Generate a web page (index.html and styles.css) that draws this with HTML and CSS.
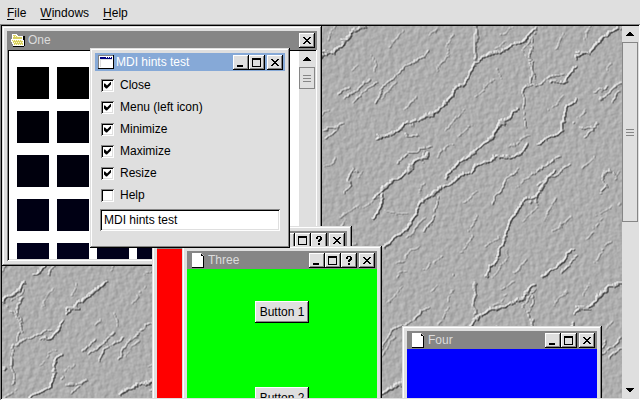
FILE: index.html
```html
<!DOCTYPE html>
<html lang="en">
<head>
<meta charset="utf-8">
<title>Workspace</title>
<link rel="stylesheet" href="styles.css">
</head>
<body>
<svg class="defs" aria-hidden="true">
  <symbol id="min" viewBox="0 0 16 15"><path d="M4 10h6v2H4z"/></symbol>
  <symbol id="max" viewBox="0 0 16 15"><path fill-rule="evenodd" d="M3 3h9v9H3zM4 5v6h7V5z"/></symbol>
  <symbol id="close" viewBox="0 0 16 15"><path d="M4 4h2v1h1v1h2V5h1V4h2v1h-1v1h-1v1H9v1h1v1h1v1h1v1h-2v-1H9V9H7v1H6v1H4v-1h1V9h1V8h1V7H6V6H5V5H4z"/></symbol>
  <symbol id="help" viewBox="0 0 16 15"><path d="M6 3h4v1h1v3h-1v1H9v1H7V7h1V6h1V4H7v2H5V4h1zM7 10h2v2H7z"/></symbol>
  <symbol id="doc" viewBox="0 0 16 16"><path fill="#fff" d="M2 1h9v3h3v11H2z"/><path fill="#bbb" d="M11 1h1v1h1v1h1v1h-3z"/><path d="M11 2h1v1h1v1h1v12H2v-1h11V4h-2z"/></symbol>
  <symbol id="folder" viewBox="0 0 16 16"><path d="M13 4h2v10h-1v1H3v-1h10z"/><path fill="#fff" d="M2 2h5v1h1v1h5v4h1v6H3v-2H2v-2H1V7h1z"/><path fill="#d8d060" d="M3 3h3v1h1v1h5v2H3zM2 8h10v1h1v4H4v-2H3V9H2z"/><path stroke="#fffbd0" stroke-dasharray="1 1" d="M3 4.500h8M3 8.500h9M4 10.500h9M5 12.500h8"/></symbol>
  <symbol id="app" viewBox="0 0 16 16"><path fill="#808080" d="M0 1h16v14H0z"/><path d="M15 1h1v14H0v-1h15z"/><path fill="#fff" d="M1 2h14v12H1z"/><path fill="#dedede" d="M2 5h12v8H2z"/><path fill="#fff" d="M3 6h11v7H3z"/><path fill="#000080" d="M2 3h12v2H2z"/><path fill="#fff" d="M8 3h1v1H8zM10 3h1v1h-1zM12 3h1v1h-1z"/></symbol>
  <symbol id="up" viewBox="0 0 16 16"><path d="M7 6h2v1h1v1h1v1h1v1H4V9h1V8h1V7h1z"/></symbol>
  <symbol id="down" viewBox="0 0 16 16"><path d="M4 6h8v1h-1v1h-1v1H9v1H7V9H6V8H5V7H4z"/></symbol>
</svg>

<nav class="menubar">
  <button><u>F</u>ile</button>
  <button><u>W</u>indows</button>
  <button><u>H</u>elp</button>
</nav>

<main class="frame">
  <div class="workspace">
    <svg class="stone" aria-hidden="true">
      <defs>
        <pattern id="creases" width="768" height="768" patternUnits="userSpaceOnUse" patternTransform="translate(318 -6) scale(.33333)">
          <g fill="none" stroke="#000" stroke-linecap="round" stroke-linejoin="round">
            <path stroke-width="6" d="M170 355L235 325 310 297 390 235 440 175 465 130 510 102 560 90 610 60 650 25M165 535L205 490 250 465 295 425 325 405M160 600L188 550 190 520M385 470L415 425 470 395 520 350 545 310 590 270M190 680L240 645 280 595 310 545 345 517 390 495 425 465 490 435 530 405 580 415 620 375M430 830L500 760 540 690 565 640 580 590 610 545 650 530 700 450M0 110L45 90 100 35 130 20M700 190L735 180 770 135M0 100L20 95 45 100M655 370L725 335 740 260 770 230M470 890L500 865 570 845 610 820 650 790 720 730 770 680 800 650"/>
            <path stroke-width="4" stroke-opacity=".75" d="M160 250L200 190 245 150 275 140 330 90M280 130L320 100M605 220L630 195 640 130 600 90 650 40M610 210L680 180 730 160M640 60L625 120 645 170M100 250L130 220 175 190M105 215L150 175M20 350L70 310M15 325L60 320M230 430L265 400 330 385M310 400L310 425M465 20V120M610 215L615 320M465 780V890M515 555L545 500 600 450M350 530L350 580 310 640M640 460L720 410M660 490L720 455 750 435M760 310L790 280 775 265M630 550L655 520 650 550M690 840L730 750 770 700M340 840L380 800 400 765M250 340L300 350M80 475L95 450 115 460M75 520L95 495 80 475M75 235L110 210M55 225L90 200"/>
            <path stroke-width="3" stroke-opacity=".5" d="M155 110L165 150M330 50L360 25M90 155L110 130M20 60L45 20M205 80L245 30M380 80L405 40M530 150L545 175M520 90L560 60M350 160L390 90M250 270L290 230M180 240L225 190M270 320L320 285M380 330L430 275M460 225L520 180M410 350L460 315M350 410L400 370M20 440L50 410M115 480L130 455M60 590L110 560M130 560L180 530M200 575L260 585M290 520L320 490M430 545L470 515M500 680L540 650M440 640L480 590M610 610L650 560M675 600L710 535M230 730L290 680M220 780L260 750M310 750L370 705M520 770L570 690M580 760L620 720M640 880L660 800M700 640L750 590M30 660L80 600M50 730L105 670M140 750L180 700M420 700L460 650M260 650L320 590M570 380L630 340M690 270L740 220M5 290L30 270M545 45L580 20M700 90L740 40M590 500L640 460"/>
          </g>
        </pattern>
        <filter id="relief" x="0" y="0" width="100%" height="100%" color-interpolation-filters="sRGB">
          <feTurbulence type="fractalNoise" baseFrequency=".07" numOctaves="3" seed="4" result="warp"/>
          <feDisplacementMap in="SourceAlpha" in2="warp" scale="9" xChannelSelector="R" yChannelSelector="G"/>
          <feGaussianBlur stdDeviation=".6" result="lines"/>
          <feTurbulence type="fractalNoise" baseFrequency=".2" numOctaves="4" seed="9" result="grain"/>
          <feComposite in="lines" in2="grain" operator="arithmetic" k2=".28" k3=".2"/>
          <feDiffuseLighting surfaceScale="1.6" diffuseConstant="1" lighting-color="#f6f6f6">
            <feDistantLight azimuth="215" elevation="45"/>
          </feDiffuseLighting>
        </filter>
      </defs>
      <rect width="100%" height="100%" fill="url(#creases)" filter="url(#relief)"/>
    </svg>

    <section class="window one">
      <header class="title"><svg class="icon"><use href="#folder"/></svg><h2>One</h2>
        <button class="tool last" aria-label="Close"><svg><use href="#close"/></svg></button></header>
      <div class="view sunken">
        <div class="swatches">
          <i></i><i></i><i></i><i></i><i></i><i></i>
          <i></i><i></i><i></i><i></i><i></i><i></i>
          <i></i><i></i><i></i><i></i><i></i><i></i>
          <i></i><i></i><i></i><i></i><i></i><i></i>
          <i></i><i></i><i></i><i></i><i></i><i></i>
        </div>
        <div class="scrollbar"><button aria-label="Scroll up"><svg><use href="#up"/></svg></button><div class="thumb short"><b class="grip"></b></div></div>
      </div>
    </section>

    <section class="window two">
      <header class="title"><svg class="icon"><use href="#doc"/></svg><h2>Two</h2>
        <button class="tool" aria-label="Minimize"><svg><use href="#min"/></svg></button>
        <button class="tool" aria-label="Maximize"><svg><use href="#max"/></svg></button>
        <button class="tool" aria-label="Help"><svg><use href="#help"/></svg></button>
        <button class="tool last" aria-label="Close"><svg><use href="#close"/></svg></button></header>
      <div class="fill red"></div>
    </section>

    <section class="window three">
      <header class="title"><svg class="icon"><use href="#doc"/></svg><h2>Three</h2>
        <button class="tool" aria-label="Minimize"><svg><use href="#min"/></svg></button>
        <button class="tool" aria-label="Maximize"><svg><use href="#max"/></svg></button>
        <button class="tool" aria-label="Help"><svg><use href="#help"/></svg></button>
        <button class="tool last" aria-label="Close"><svg><use href="#close"/></svg></button></header>
      <div class="fill green">
        <button class="push">Button 1</button>
        <button class="push">Button 2</button>
      </div>
    </section>

    <section class="window four">
      <header class="title"><svg class="icon"><use href="#doc"/></svg><h2>Four</h2>
        <button class="tool" aria-label="Minimize"><svg><use href="#min"/></svg></button>
        <button class="tool" aria-label="Maximize"><svg><use href="#max"/></svg></button>
        <button class="tool last" aria-label="Close"><svg><use href="#close"/></svg></button></header>
      <div class="fill blue"></div>
    </section>

    <section class="window hints active">
      <header class="title"><svg class="icon"><use href="#app"/></svg><h2>MDI hints test</h2>
        <button class="tool" aria-label="Minimize"><svg><use href="#min"/></svg></button>
        <button class="tool" aria-label="Maximize"><svg><use href="#max"/></svg></button>
        <button class="tool last" aria-label="Close"><svg><use href="#close"/></svg></button></header>
      <form class="options">
        <label><input type="checkbox" class="sunken" checked>Close</label>
        <label><input type="checkbox" class="sunken" checked>Menu (left icon)</label>
        <label><input type="checkbox" class="sunken" checked>Minimize</label>
        <label><input type="checkbox" class="sunken" checked>Maximize</label>
        <label><input type="checkbox" class="sunken" checked>Resize</label>
        <label><input type="checkbox" class="sunken">Help</label>
        <input type="text" class="caption sunken" aria-label="Caption" value="MDI hints test">
      </form>
    </section>
  </div>

  <div class="scrollbar">
    <button aria-label="Scroll up"><svg><use href="#up"/></svg></button>
    <div class="track"><div class="thumb long"><b class="grip"></b></div></div>
    <button aria-label="Scroll down"><svg><use href="#down"/></svg></button>
  </div>
</main>
</body>
</html>
```
FILE: styles.css
```css
:root {
  --face: #dfdfdf;
  --shade: #868686;
}

* { box-sizing: border-box; }

body {
  margin: 0;
  height: 100vh;
  display: flex;
  flex-direction: column;
  background: var(--face);
  color: #000;
  font: 12px/16px "Liberation Sans", Arial, sans-serif;
  overflow: hidden;
}

button, input {
  font: inherit;
  color: inherit;
  margin: 0;
  padding: 0;
  border: 0;
  border-radius: 0;
  background: var(--face);
}

svg { display: block; width: 16px; height: 16px; shape-rendering: crispEdges; }
.defs { position: absolute; width: 0; height: 0; }

.menubar { display: flex; gap: 14px; height: 24px; padding: 1px 7px 0; }
.menubar u { text-underline-offset: 2px; }

.frame {
  flex: 1;
  min-height: 0;
  display: flex;
  padding: 2px;
  box-shadow: inset 1px 1px var(--shade), inset -1px -1px #fff,
    inset 2px 2px #000, inset -2px -2px var(--face);
}

.workspace { flex: 1; position: relative; overflow: hidden; background: #b0b0b0; }
.stone { width: 100%; height: 100%; }

.sunken {
  padding: 2px;
  box-shadow: inset 1px 1px var(--shade), inset -1px -1px #fff,
    inset 2px 2px #000, inset -2px -2px var(--face);
}

/* Windows */
.window {
  position: absolute;
  display: flex;
  flex-direction: column;
  width: 200px;
  height: 200px;
  padding: 5px;
  background: var(--face);
  box-shadow: inset -1px -1px #000, inset 1px 1px var(--face),
    inset -2px -2px var(--shade), inset 2px 2px #fff;
}
.one { left: 0; top: 0; width: 320px; height: 240px; }
.two { left: 150px; top: 200px; }
.three { left: 180px; top: 220px; }
.four { left: 400px; top: 300px; }
.hints { left: 88px; top: 22px; }

.title {
  flex: none;
  display: flex;
  height: 18px;
  padding: 0 2px 0 3px;
  background: var(--shade);
  color: #dcdcdc;
}
.active .title { background: #86a9d7; color: #fff; }
.title h2 { flex: 1; margin: 0 0 0 2px; font: inherit; line-height: 18px; }
.icon { margin-top: 1px; }

.tool {
  width: 16px;
  height: 15px;
  margin-top: 2px;
  box-shadow: inset -1px -1px #000, inset 1px 1px #fff, inset -2px -2px var(--shade);
}
.tool svg { height: 15px; }
.last { margin-left: 2px; }

.fill { flex: 1; }
.red { background: #f00; }
.green {
  background: #0f0;
  display: flex;
  flex-direction: column;
  align-items: center;
  gap: 64px;
  padding-top: 32px;
}
.blue { background: #00f; }

.push {
  flex: none;
  width: 54px;
  height: 22px;
  box-shadow: inset -1px -1px #000, inset 1px 1px #fff, inset -2px -2px var(--shade);
}

/* Swatch view */
.view { flex: 1; min-height: 0; display: flex; background: #fff; }
.swatches {
  flex: 1;
  display: grid;
  grid-template-columns: repeat(6, 32px);
  grid-auto-rows: 32px;
  gap: 12px 8px;
  padding: 16px 8px 0;
  overflow: hidden;
}
.swatches i { background: #000; }
.swatches i:nth-child(n+7) { background: #000008; }
.swatches i:nth-child(n+13) { background: #00000d; }
.swatches i:nth-child(n+19) { background: #000014; }
.swatches i:nth-child(n+25) { background: #00001b; }

/* Scroll bars */
.scrollbar { flex: none; width: 16px; display: flex; flex-direction: column; background: var(--face); }
.scrollbar button { height: 16px; }
.track { flex: 1; }
.thumb { display: flex; align-items: center; justify-content: center; border: 1px solid var(--shade); }
.short { height: 22px; }
.long { height: 53%; }
.grip {
  width: 8px;
  height: 7px;
  background: repeating-linear-gradient(var(--shade) 0 1px, transparent 1px 3px);
}

/* Hints form */
.options { display: flex; flex-direction: column; gap: 6px; padding: 6px 5px 0; }
.options label { display: flex; align-items: center; gap: 6px; padding-left: 1px; }
.options [type="checkbox"] { appearance: none; width: 13px; height: 13px; background: #fff; }
.options :checked::before {
  content: "";
  display: block;
  width: 7px;
  height: 7px;
  margin: 1px;
  background: #000;
  clip-path: polygon(0 2px, 1px 2px, 3px 4px, 7px 0, 7px 3px, 3px 7px, 2px 7px, 0 5px);
}
.caption { height: 22px; padding: 2px 4px; background: #fff; }
```
